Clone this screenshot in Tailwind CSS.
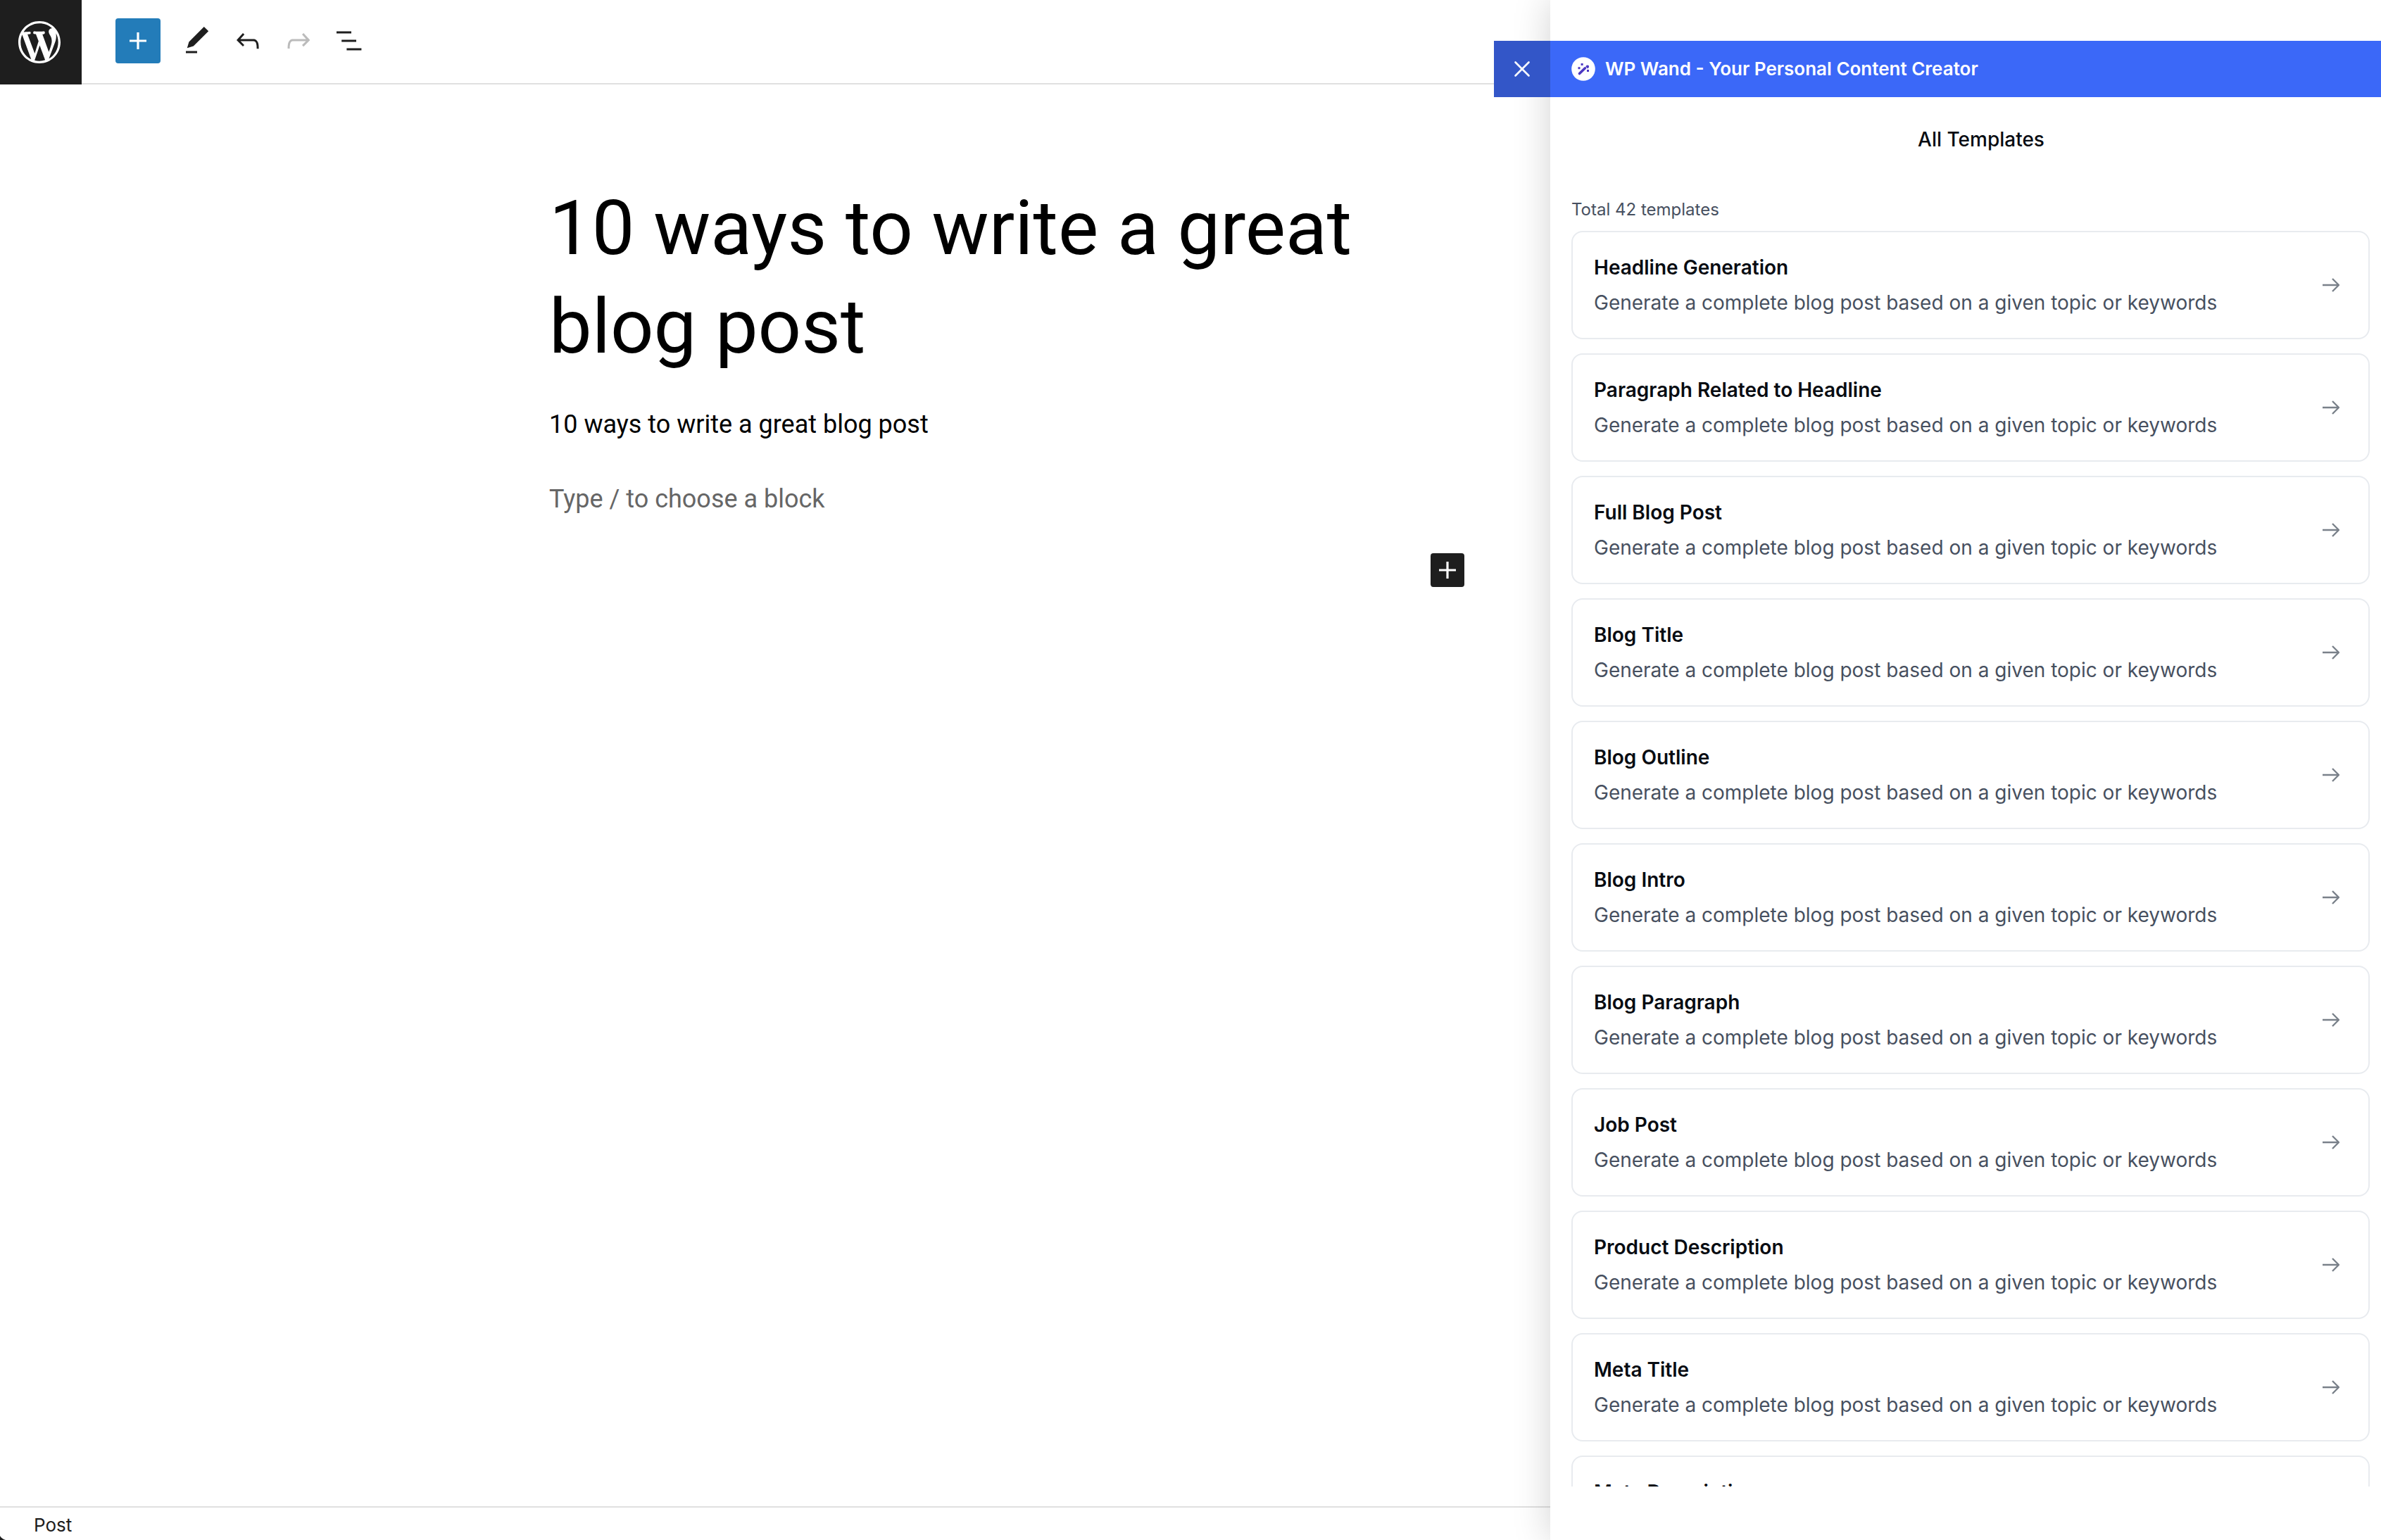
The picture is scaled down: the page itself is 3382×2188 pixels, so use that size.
<!DOCTYPE html>
<html lang="en">
<head>
<meta charset="utf-8">
<meta name="viewport" content="width=device-width, initial-scale=1">
<title>Edit Post</title>
<script src="https://cdn.jsdelivr.net/npm/@tailwindcss/browser@4"></script>
</head>
<body class="bg-white font-['Inter',sans-serif] text-[#1e1e1e]">
<svg class="hidden" aria-hidden="true">
  <symbol id="arrow" viewBox="0 0 24 24"><path d="M0 12h23M14 3l9 9-9 9" fill="none" stroke="currentColor" stroke-width="2.4" stroke-linejoin="round"/></symbol>
  <symbol id="plus" viewBox="0 0 24 24"><path d="M18 11.2h-5.2V6h-1.6v5.2H6v1.6h5.2V18h1.6v-5.2H18z" fill="currentColor"/></symbol>
</svg>
<div class="flex h-screen overflow-hidden">

  <!-- Editor -->
  <div class="relative flex min-w-0 flex-1 flex-col">
    <header class="flex h-[120px] shrink-0">
      <a href="#" aria-label="View posts" class="flex w-[116px] items-center justify-center bg-[#1e1e1e] pr-1 text-white">
        <svg class="size-[60px]" viewBox="0 0 20 20" fill="currentColor"><path d="M20 10c0-5.51-4.49-10-10-10C4.48 0 0 4.49 0 10c0 5.52 4.48 10 10 10 5.51 0 10-4.48 10-10zM7.78 15.37L4.37 6.22c.55-.02 1.17-.08 1.17-.08.5-.06.44-1.13-.06-1.11 0 0-1.45.11-2.37.11-.18 0-.37 0-.58-.01C4.12 2.69 6.87 1.11 10 1.11c2.33 0 4.45.87 6.05 2.34-.68-.11-1.65.39-1.65 1.58 0 .74.45 1.36.9 2.1.35.61.55 1.36.55 2.46 0 1.49-1.4 5-1.4 5l-3.03-8.37c.54-.02.82-.17.82-.17.5-.05.44-1.25-.06-1.22 0 0-1.44.12-2.38.12-.87 0-2.33-.12-2.33-.12-.5-.03-.56 1.2-.06 1.22l.92.08 1.26 3.41zM17.41 10c.24-.64.74-1.87.43-4.25.7 1.29 1.05 2.71 1.05 4.25 0 3.29-1.73 6.24-4.4 7.78.97-2.59 1.94-5.2 2.92-7.78zM6.1 18.09C3.12 16.65 1.11 13.53 1.11 10c0-1.3.23-2.48.72-3.59C3.25 10.3 4.67 14.2 6.1 18.09zm4.03-6.63l2.58 6.98c-.86.29-1.76.45-2.71.45-.79 0-1.57-.11-2.29-.33.81-2.38 1.62-4.74 2.42-7.1z"/></svg>
      </a>
      <div class="flex flex-1 items-center gap-2 border-b-2 border-[#e0e0e0] pb-0.5 pl-12">
        <button type="button" aria-label="Add block" class="mr-3 flex size-16 items-center justify-center rounded-sm bg-[#237cb9] text-white"><svg class="size-12"><use href="#plus"/></svg></button>
        <button type="button" aria-label="Tools" class="flex size-16 items-center justify-center"><svg class="size-12" viewBox="0 0 24 24" fill="currentColor"><path d="M20.1 5.1L16.9 2 6.2 12.7l-1.3 4.4 4.5-1.3L20.1 5.1zM4 20.8h8v-1.5H4v1.5z"/></svg></button>
        <button type="button" aria-label="Undo" class="flex size-16 items-center justify-center"><svg class="size-12" viewBox="0 0 24 24" fill="currentColor"><path d="M18.3 11.7c-.6-.6-1.4-.9-2.3-.9H6.7l2.9-3.3-1.1-1-4.5 5L8.5 16l1-1-2.7-2.7H16c.5 0 .9.2 1.3.5 1 1 1 3.4 1 4.5v.3h1.5v-.2c0-1.5 0-4.3-1.5-5.7z"/></svg></button>
        <button type="button" aria-label="Redo" class="flex size-16 items-center justify-center text-[#bbbbbb]"><svg class="size-12" viewBox="0 0 24 24" fill="currentColor"><path d="M15.6 6.5l-1.1 1 2.9 3.3H8c-.9 0-1.7.3-2.3.9-1.4 1.5-1.4 4.2-1.4 5.6v.2h1.5v-.3c0-1.1 0-3.5 1-4.5.3-.3.7-.5 1.3-.5h9.2L14.5 15l1.1 1.1 4.6-4.6-4.6-5z"/></svg></button>
        <button type="button" aria-label="Document overview" class="flex size-16 items-center justify-center"><svg class="size-12" viewBox="0 0 24 24" fill="currentColor"><path d="M3 5.2h10.5v1.6H3zM6.6 11.2h10.4v1.6H6.6zM10.2 17.2h10.5v1.6H10.2z"/></svg></button>
      </div>
    </header>

    <main class="flex flex-1 flex-col pt-[134px] pr-[122px] pl-[780px] font-['Roboto',sans-serif] text-black">
      <h1 class="text-[108px] leading-[140px]">10 ways to write a great<br>blog post</h1>
      <p class="mt-10 text-[36px] leading-[58px]">10 ways to write a great blog post</p>
      <p class="mt-12 text-[36px] leading-[58px] text-[#666666]">Type / to choose a block</p>
      <button type="button" aria-label="Add block" class="mt-12 flex size-12 items-center justify-center self-end rounded-sm bg-[#1e1e1e] text-white"><svg class="size-12"><use href="#plus"/></svg></button>
    </main>

    <footer class="flex h-12 shrink-0 items-center border-t-2 border-[#e0e0e0] pt-1 pl-12 text-[26px] leading-10">Post</footer>
    <svg class="absolute bottom-0 left-0 size-2" viewBox="0 0 8 8" aria-hidden="true"><path d="M0 2Q2 6 8 8H0z" fill="#1e1e1e"/></svg>
  </div>

  <!-- WP Wand panel -->
  <aside class="relative flex w-[1180px] shrink-0 flex-col bg-white pt-[58px] pb-[76px] shadow-[0_0_50px_rgba(0,0,0,0.18)]">
    <button type="button" aria-label="Close" class="absolute top-[58px] -left-20 flex size-20 items-center justify-center bg-[#3356c8] text-white"><svg class="size-6" viewBox="0 0 24 24" fill="none" stroke="currentColor" stroke-width="2.6" stroke-linecap="round"><path d="M2.500 2.500l19 19M21.500 2.500l-19 19"/></svg></button>
    <div class="flex h-20 shrink-0 items-center gap-[14px] bg-[#3b68f8] pl-[30px] text-white">
      <svg class="size-[34px]" viewBox="0 0 34 34" aria-hidden="true"><circle cx="17" cy="17" r="16.800" fill="#fff"/><g fill="#4c38c2"><path d="M11.500 23.500L19.500 15.800" stroke="#4c38c2" stroke-width="3.600" stroke-linecap="round"/><path d="M20.300 13.300l1.800-1.800 2.600.6.300 2.400-2 2z"/><rect x="13.600" y="9" width="3" height="3"/><rect x="9.500" y="14.200" width="3" height="3"/><rect x="22" y="18" width="3" height="3"/></g></svg>
      <h2 class="text-[26px] leading-10 font-semibold">WP Wand - Your Personal Content Creator</h2>
    </div>
    <h3 class="mt-10 pl-11 text-center text-[28px] leading-10 font-medium text-[#080c12]">All Templates</h3>
    <p class="mt-[60px] pl-[30px] text-[24px] leading-10 text-[#475060]">Total 42 templates</p>
    <div class="mt-[10px] flex min-h-0 flex-1 flex-col gap-5 overflow-hidden pr-4 pl-[30px] text-[28px] leading-[50px] text-[#475060]">
      <a href="#" class="flex shrink-0 items-center justify-between rounded-2xl border-2 border-[#e8ebef] px-[30px] py-[25px]"><span><strong class="block font-semibold text-[#080c12]">Headline Generation</strong>Generate a complete blog post based on a given topic or keywords</span><svg class="mr-[11px] size-6 text-[#7a818a]"><use href="#arrow"/></svg></a>
      <a href="#" class="flex shrink-0 items-center justify-between rounded-2xl border-2 border-[#e8ebef] px-[30px] py-[25px]"><span><strong class="block font-semibold text-[#080c12]">Paragraph Related to Headline</strong>Generate a complete blog post based on a given topic or keywords</span><svg class="mr-[11px] size-6 text-[#7a818a]"><use href="#arrow"/></svg></a>
      <a href="#" class="flex shrink-0 items-center justify-between rounded-2xl border-2 border-[#e8ebef] px-[30px] py-[25px]"><span><strong class="block font-semibold text-[#080c12]">Full Blog Post</strong>Generate a complete blog post based on a given topic or keywords</span><svg class="mr-[11px] size-6 text-[#7a818a]"><use href="#arrow"/></svg></a>
      <a href="#" class="flex shrink-0 items-center justify-between rounded-2xl border-2 border-[#e8ebef] px-[30px] py-[25px]"><span><strong class="block font-semibold text-[#080c12]">Blog Title</strong>Generate a complete blog post based on a given topic or keywords</span><svg class="mr-[11px] size-6 text-[#7a818a]"><use href="#arrow"/></svg></a>
      <a href="#" class="flex shrink-0 items-center justify-between rounded-2xl border-2 border-[#e8ebef] px-[30px] py-[25px]"><span><strong class="block font-semibold text-[#080c12]">Blog Outline</strong>Generate a complete blog post based on a given topic or keywords</span><svg class="mr-[11px] size-6 text-[#7a818a]"><use href="#arrow"/></svg></a>
      <a href="#" class="flex shrink-0 items-center justify-between rounded-2xl border-2 border-[#e8ebef] px-[30px] py-[25px]"><span><strong class="block font-semibold text-[#080c12]">Blog Intro</strong>Generate a complete blog post based on a given topic or keywords</span><svg class="mr-[11px] size-6 text-[#7a818a]"><use href="#arrow"/></svg></a>
      <a href="#" class="flex shrink-0 items-center justify-between rounded-2xl border-2 border-[#e8ebef] px-[30px] py-[25px]"><span><strong class="block font-semibold text-[#080c12]">Blog Paragraph</strong>Generate a complete blog post based on a given topic or keywords</span><svg class="mr-[11px] size-6 text-[#7a818a]"><use href="#arrow"/></svg></a>
      <a href="#" class="flex shrink-0 items-center justify-between rounded-2xl border-2 border-[#e8ebef] px-[30px] py-[25px]"><span><strong class="block font-semibold text-[#080c12]">Job Post</strong>Generate a complete blog post based on a given topic or keywords</span><svg class="mr-[11px] size-6 text-[#7a818a]"><use href="#arrow"/></svg></a>
      <a href="#" class="flex shrink-0 items-center justify-between rounded-2xl border-2 border-[#e8ebef] px-[30px] py-[25px]"><span><strong class="block font-semibold text-[#080c12]">Product Description</strong>Generate a complete blog post based on a given topic or keywords</span><svg class="mr-[11px] size-6 text-[#7a818a]"><use href="#arrow"/></svg></a>
      <a href="#" class="flex shrink-0 items-center justify-between rounded-2xl border-2 border-[#e8ebef] px-[30px] py-[25px]"><span><strong class="block font-semibold text-[#080c12]">Meta Title</strong>Generate a complete blog post based on a given topic or keywords</span><svg class="mr-[11px] size-6 text-[#7a818a]"><use href="#arrow"/></svg></a>
      <a href="#" class="flex shrink-0 items-center justify-between rounded-2xl border-2 border-[#e8ebef] px-[30px] py-[25px]"><span><strong class="block font-semibold text-[#080c12]">Meta Description</strong>Generate a complete blog post based on a given topic or keywords</span><svg class="mr-[11px] size-6 text-[#7a818a]"><use href="#arrow"/></svg></a>
    </div>
  </aside>
</div>
</body>
</html>
